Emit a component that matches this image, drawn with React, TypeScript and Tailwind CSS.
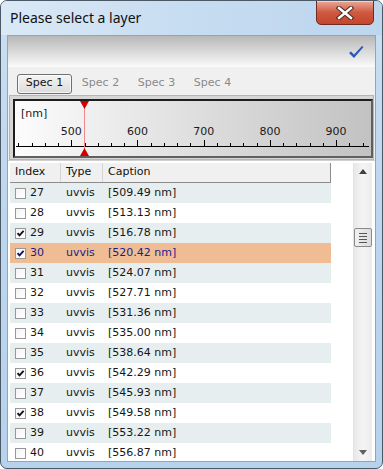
import React from "react";

const rows = [
  { i: 27, c: "509.49", checked: false },
  { i: 28, c: "513.13", checked: false },
  { i: 29, c: "516.78", checked: true },
  { i: 30, c: "520.42", checked: true, sel: true },
  { i: 31, c: "524.07", checked: false },
  { i: 32, c: "527.71", checked: false },
  { i: 33, c: "531.36", checked: false },
  { i: 34, c: "535.00", checked: false },
  { i: 35, c: "538.64", checked: false },
  { i: 36, c: "542.29", checked: true },
  { i: 37, c: "545.93", checked: false },
  { i: 38, c: "549.58", checked: true },
  { i: 39, c: "553.22", checked: false },
  { i: 40, c: "556.87", checked: false },
];

function Check({ checked, sel }: { checked: boolean; sel?: boolean }) {
  return (
    <div className="w-[11px] h-[11px] border border-[#979797] bg-gradient-to-br from-[#f4f4f4] to-white flex items-center justify-center shrink-0">
      {checked && (
        <svg width="9" height="9" viewBox="0 0 9 9">
          <path d="M1.5 4.2 L3.5 6.4 L7.6 1.8" fill="none" stroke={sel ? "#101060" : "#111"} strokeWidth="1.8" />
        </svg>
      )}
    </div>
  );
}

function Ruler() {
  const ticks = [];
  for (let i = 0; i <= 26; i++) {
    const x = Math.round(3.3 + 13.24 * i) + 0.5;
    const major = i % 5 === 4;
    ticks.push(<line key={i} x1={x} x2={x} y1={major ? 39 : 42} y2={45} stroke="#000" strokeWidth="1" />);
  }
  const labels = [
    { t: "500", x: 56.3 },
    { t: "600", x: 122.5 },
    { t: "700", x: 188.7 },
    { t: "800", x: 254.9 },
    { t: "900", x: 321.1 },
  ];
  return (
    <div className="relative w-[356px] h-[55px] bg-gradient-to-r from-[#fcfcfc] to-[#c2c2c2]">
      <svg className="absolute left-0 top-0" width="356" height="55" viewBox="0 0 356 55">
        <line x1="1" x2="354" y1="45.5" y2="45.5" stroke="#000" strokeWidth="1" />
        {ticks}
        <line x1="69.5" x2="69.5" y1="0" y2="55" stroke="#f08a8a" strokeWidth="1" />
        <polygon points="65,0 74,0 69.5,8" fill="#d00000" />
        <polygon points="65,55 74,55 69.5,47" fill="#d00000" />
      </svg>
      <span className="absolute left-[6px] top-[6px] text-[11px] leading-[13px] text-[#1a1a1a]">[nm]</span>
      {labels.map((l) => (
        <span
          key={l.t}
          className="absolute top-[24px] text-[11px] leading-[13px] text-[#1a1a1a] w-[30px] text-center"
          style={{ left: l.x - 15 }}
        >
          {l.t}
        </span>
      ))}
    </div>
  );
}

export default function App() {
  return (
    <div
      className="w-[383px] h-[469px] bg-white"
      style={{ fontFamily: '"DejaVu Sans", Verdana, sans-serif' }}
    >
      <div className="relative w-[383px] h-[469px] rounded-[7px] border border-[#4b5866] bg-gradient-to-b from-[#c9dff3] via-[#bcd6ef] to-[#b7d2ec] flex flex-col overflow-hidden">
        {/* title bar */}
        <div className="relative h-[34px] shrink-0 bg-gradient-to-r from-[#dbe9f6] via-[#c6dcf1] to-[#bdd6ee]">
          <span
            className="absolute left-[9px] top-[8px] text-[14px] leading-[18px] text-[#111]"
            style={{ fontFamily: '"Noto Sans", "Open Sans", sans-serif' }}
          >
            Please select a layer
          </span>
          <div className="absolute left-[315px] top-[-1px] w-[58px] h-[25px] rounded-b-[5px] border border-[#6e2b20] bg-gradient-to-b from-[#e9a896] via-[#cf5841] to-[#c5452c] flex items-center justify-center shadow-[inset_0_1px_0_rgba(255,255,255,0.5)]">
            <svg width="18" height="14" viewBox="0 0 18 14">
              <path d="M3 2 L15 12 M15 2 L3 12" stroke="#4a2a24" strokeWidth="4.5" strokeLinecap="square" />
              <path d="M3 2 L15 12 M15 2 L3 12" stroke="#fff" strokeWidth="2.5" strokeLinecap="square" />
            </svg>
          </div>
        </div>
        {/* client */}
        <div className="mx-[6px] mb-[6px] flex-1 border border-[#8ea5bd] bg-[#f0f0f0] flex flex-col min-h-0">
          {/* toolbar */}
          <div className="h-[31px] shrink-0 bg-gradient-to-b from-[#b8b8b8] to-[#fbfbfb] flex items-center justify-end pr-[11px]">
            <svg width="16" height="14" viewBox="0 0 16 14">
              <path d="M1 8 L3 6.5 L6 9.5 L14 1 L15.5 2 L6 13 Z" fill="#2a5ab5" />
            </svg>
          </div>
          {/* tabs */}
          <div className="h-[28px] shrink-0 flex items-center pl-[9px] gap-[1px] text-[11px]">
            <div className="h-[20px] w-[55px] mt-[5px] rounded-[3px] border border-[#707070] bg-gradient-to-b from-[#f4f4f4] to-[#dcdcdc] flex items-center justify-center text-[#111] shadow-[inset_0_0_0_1px_rgba(255,255,255,0.7)]">
              Spec 1
            </div>
            <div className="h-[20px] w-[55px] mt-[5px] flex items-center justify-center text-[#8a8a8a]">Spec 2</div>
            <div className="h-[20px] w-[55px] mt-[5px] flex items-center justify-center text-[#8a8a8a]">Spec 3</div>
            <div className="h-[20px] w-[55px] mt-[5px] flex items-center justify-center text-[#8a8a8a]">Spec 4</div>
          </div>
          {/* ruler frame */}
          <div className="mx-[1px] h-[65px] shrink-0 border border-[#b5b5b5] bg-[#d6d6d6] p-[3px] pt-[3px]">
            <div className="border-[2px] border-[#1e1e1e] border-r-[#606060] border-b-[#606060] w-[360px]">
              <Ruler />
            </div>
          </div>
          {/* list */}
          <div className="flex-1 min-h-0 bg-white flex pt-[2px] pl-[2px] pr-[3px] overflow-hidden border-t border-[#d0d0d0]">
            <div className="w-[321px] flex flex-col text-[11px]">
              <div className="h-[20px] shrink-0 grid grid-cols-[51px_42px_1fr] bg-[#f0f0f0] border-b border-r border-[#8c8c8c] text-[#111] items-center">
                <div className="pl-[5px] h-full flex items-center border-r border-[#d5d5d5]">Index</div>
                <div className="pl-[5px] h-full flex items-center border-r border-[#d5d5d5]">Type</div>
                <div className="pl-[5px] h-full flex items-center">Caption</div>
              </div>
              {rows.map((r, idx) => (
                <div
                  key={r.i}
                  className={
                    "h-[20px] shrink-0 grid grid-cols-[51px_42px_1fr] items-center " +
                    (r.sel ? "bg-[#efbc94] text-[#1c1c8c]" : idx % 2 === 0 ? "bg-[#e6eef0] text-[#161616]" : "bg-white text-[#161616]")
                  }
                >
                  <div className="pl-[5px] flex items-center gap-[4px]">
                    <Check checked={r.checked} sel={r.sel} />
                    <span>{r.i}</span>
                  </div>
                  <div className="pl-[5px]">uvvis</div>
                  <div className="pl-[5px]">[{r.c} nm]</div>
                </div>
              ))}
            </div>
            <div className="flex-1" />
            {/* scrollbar */}
            <div className="w-[19px] h-full flex flex-col items-center bg-gradient-to-r from-[#e8e8e8] via-[#f4f4f4] to-[#ececec] border-l border-[#e2e2e2]">
              <div className="h-[17px] w-full flex items-center justify-center">
                <svg width="8" height="5" viewBox="0 0 8 5"><polygon points="0,5 8,5 4,0" fill="#404040" /></svg>
              </div>
              <div className="h-[48px]" />
              <div className="w-[18px] h-[19px] rounded-[2px] border border-[#8a8a8a] bg-gradient-to-r from-[#f0f0f0] to-[#dcdcdc] flex flex-col items-center justify-center gap-[2px]">
                <div className="w-[8px] h-[1px] bg-[#555]" />
                <div className="w-[8px] h-[1px] bg-[#555]" />
                <div className="w-[8px] h-[1px] bg-[#555]" />
                <div className="w-[8px] h-[1px] bg-[#555]" />
              </div>
              <div className="flex-1" />
              <div className="h-[17px] w-full flex items-center justify-center">
                <svg width="8" height="5" viewBox="0 0 8 5"><polygon points="0,0 8,0 4,5" fill="#606060" /></svg>
              </div>
            </div>
          </div>
        </div>
      </div>
    </div>
  );
}
